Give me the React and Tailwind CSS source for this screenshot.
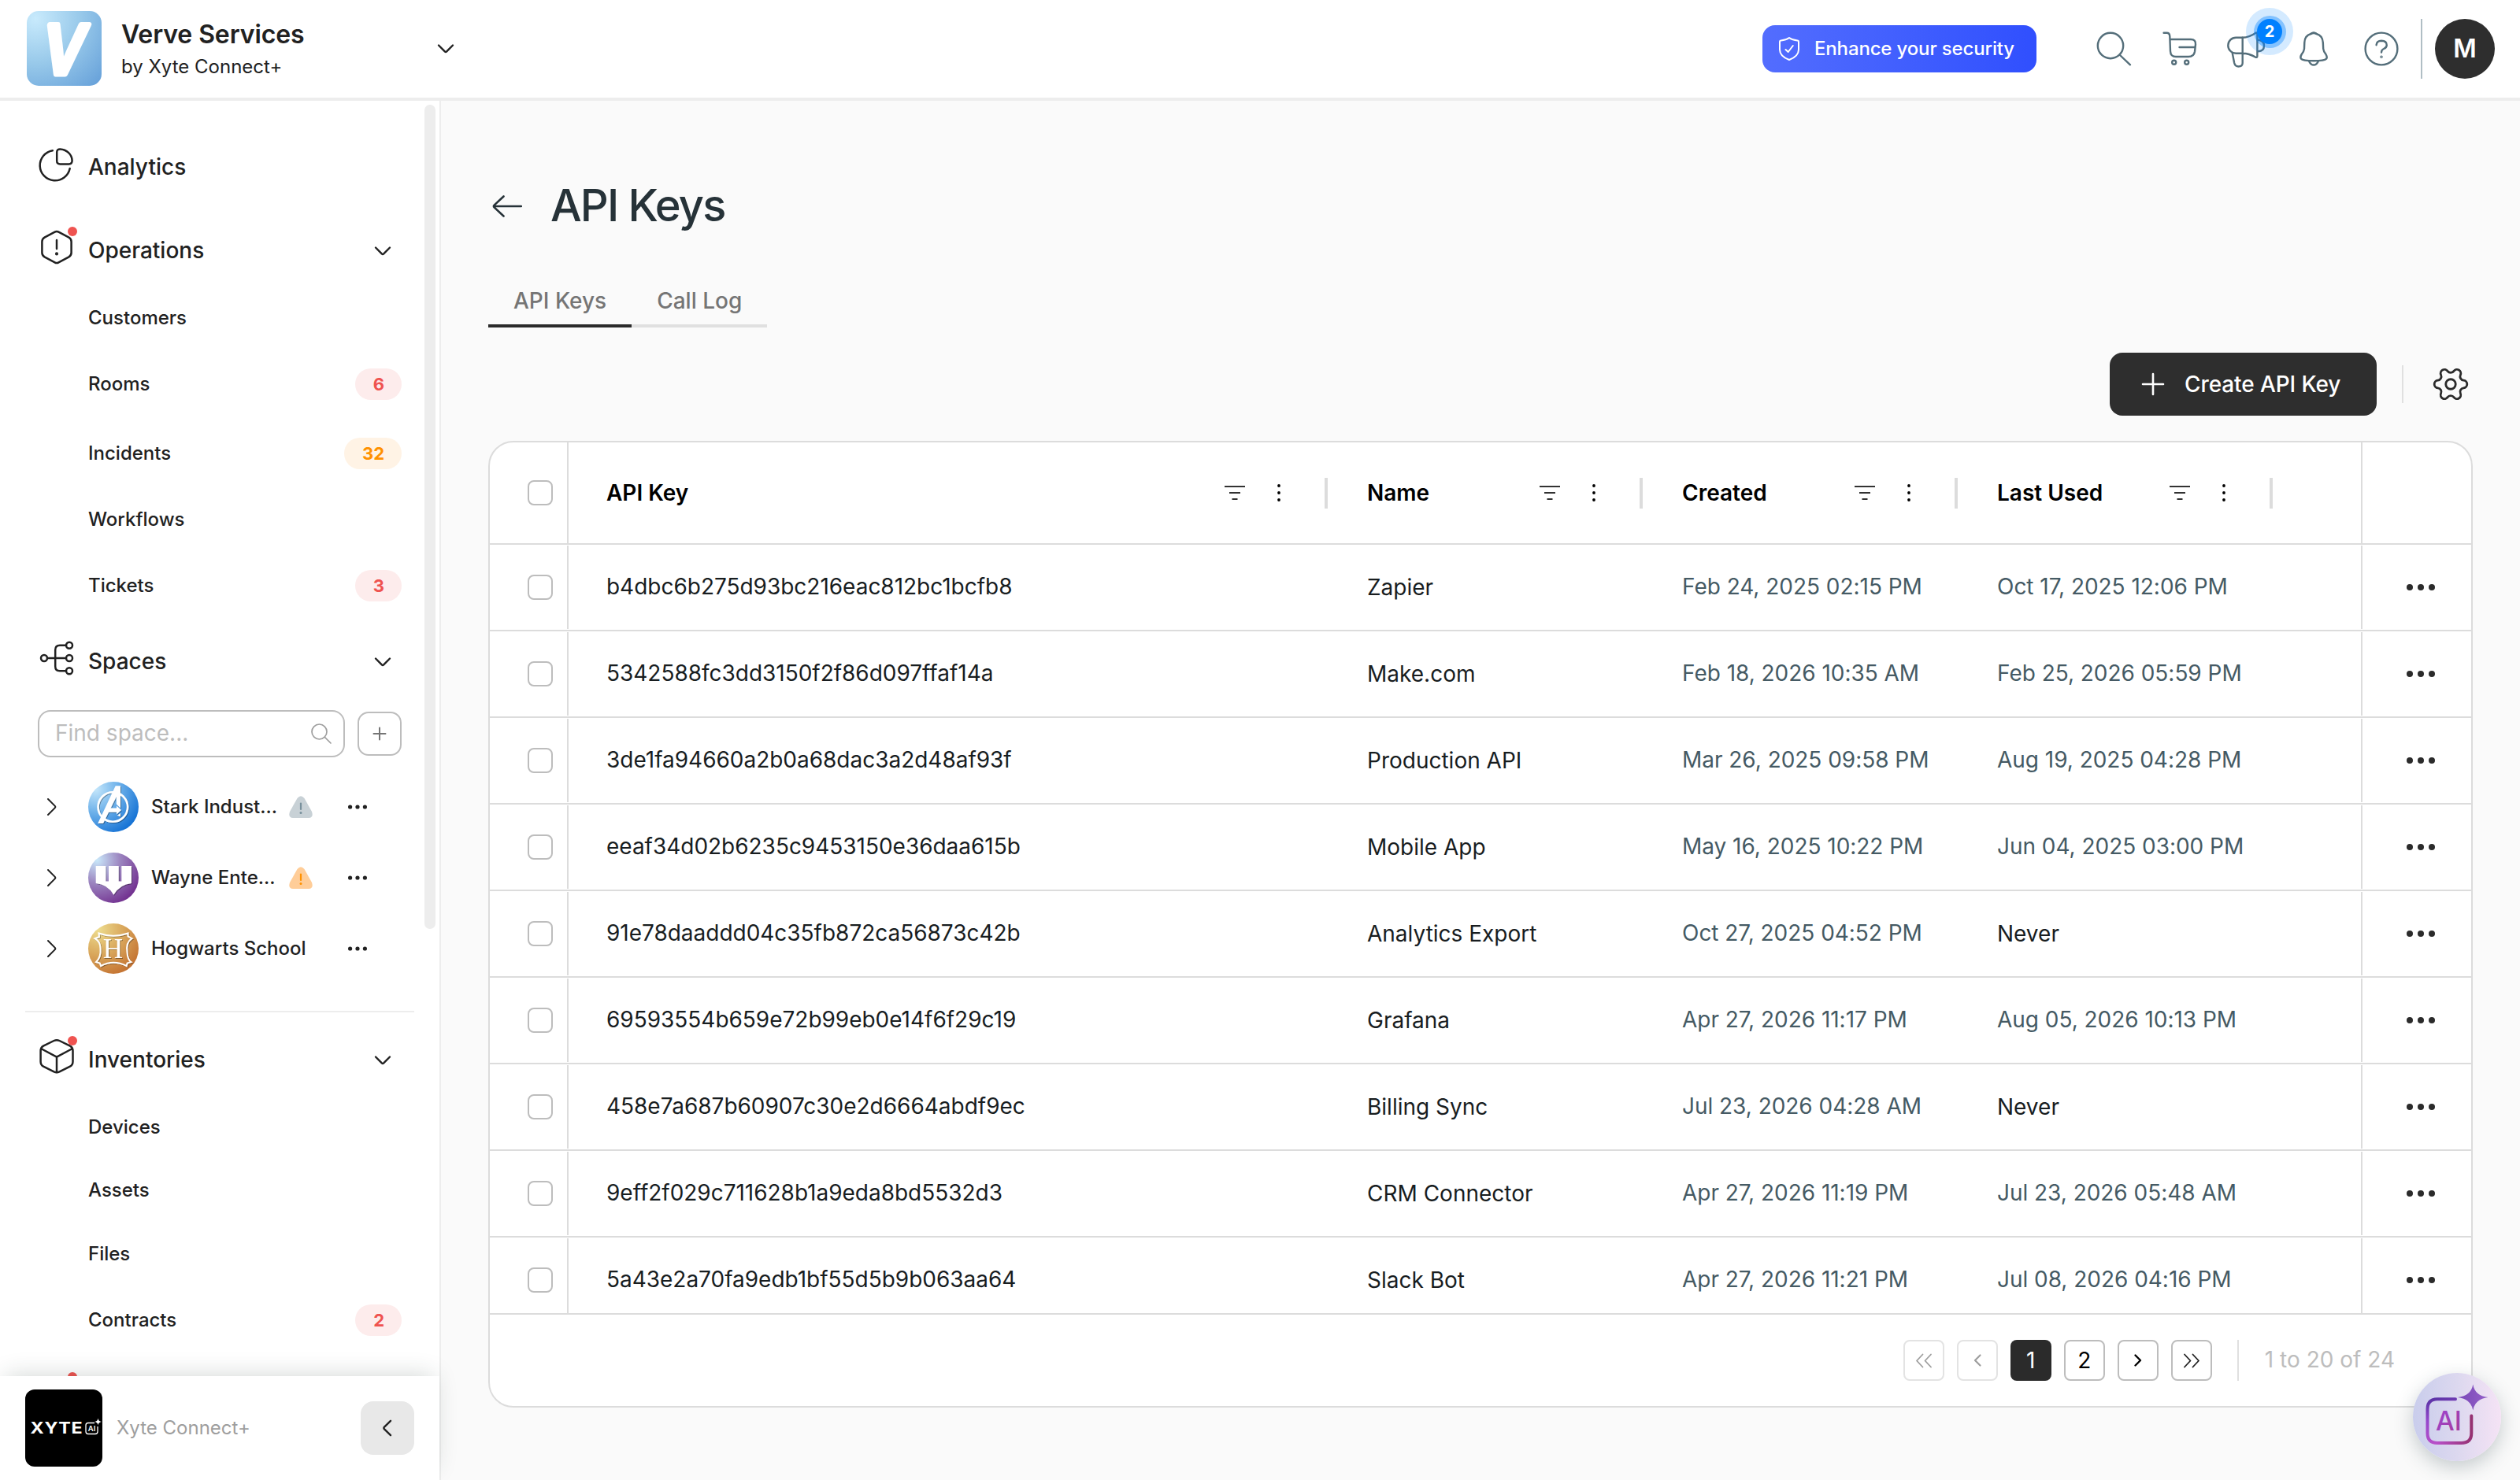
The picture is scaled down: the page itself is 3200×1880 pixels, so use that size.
import React from "react";
import { Settings } from "lucide-react";

const ROWS = [
  ["b4dbc6b275d93bc216eac812bc1bcfb8", "Zapier", "Feb 24, 2025 02:15 PM", "Oct 17, 2025 12:06 PM"],
  ["5342588fc3dd3150f2f86d097ffaf14a", "Make.com", "Feb 18, 2026 10:35 AM", "Feb 25, 2026 05:59 PM"],
  ["3de1fa94660a2b0a68dac3a2d48af93f", "Production API", "Mar 26, 2025 09:58 PM", "Aug 19, 2025 04:28 PM"],
  ["eeaf34d02b6235c9453150e36daa615b", "Mobile App", "May 16, 2025 10:22 PM", "Jun 04, 2025 03:00 PM"],
  ["91e78daaddd04c35fb872ca56873c42b", "Analytics Export", "Oct 27, 2025 04:52 PM", null],
  ["69593554b659e72b99eb0e14f6f29c19", "Grafana", "Apr 27, 2026 11:17 PM", "Aug 05, 2026 10:13 PM"],
  ["458e7a687b60907c30e2d6664abdf9ec", "Billing Sync", "Jul 23, 2026 04:28 AM", null],
  ["9eff2f029c711628b1a9eda8bd5532d3", "CRM Connector", "Apr 27, 2026 11:19 PM", "Jul 23, 2026 05:48 AM"],
  ["5a43e2a70fa9edb1bf55d5b9b063aa64", "Slack Bot", "Apr 27, 2026 11:21 PM", "Jul 08, 2026 04:16 PM"],
];

function Icon({ children, className = "", w = 48, h = 48, sw = 2.2 }) {
  return (
    <svg
      width={w}
      height={h}
      viewBox={`0 0 ${w} ${h}`}
      fill="none"
      stroke="currentColor"
      strokeWidth={sw}
      strokeLinecap="round"
      strokeLinejoin="round"
      className={`shrink-0 overflow-visible ${className}`}
    >
      {children}
    </svg>
  );
}

const ChevronDown = ({ className }) => (
  <Icon w={20} h={10} sw={2.4} className={className}>
    <path d="M1 0.5 L8.8 8.4 Q10 9.5 11.2 8.4 L19 0.5" />
  </Icon>
);

/* ---------- header ---------- */

function VerveLogo() {
  return (
    <svg width="96" height="96" viewBox="0 0 96 96" className="shrink-0 overflow-visible">
      <defs>
        <radialGradient id="verve" cx="0.12" cy="0.1" r="1.2">
          <stop offset="0" stopColor="#c8eafc" />
          <stop offset="0.5" stopColor="#98c9ea" />
          <stop offset="1" stopColor="#68a2da" />
        </radialGradient>
      </defs>
      <rect width="95" height="95" rx="15" fill="url(#verve)" />
      <text
        x="0"
        y="0"
        transform="translate(43 79.5) skewX(-10) scale(0.86 1)"
        textAnchor="middle"
        fontFamily="Inter, sans-serif"
        fontWeight="600"
        fontSize="86"
        fill="#fff"
        stroke="#fff"
        strokeWidth="7"
        strokeLinejoin="round"
      >
        V
      </text>
    </svg>
  );
}

function Header() {
  return (
    <header className="flex h-32 shrink-0 items-center border-b-4 border-[#ededed] bg-white pr-8 pl-[34px]">
      <div className="flex w-[542px] items-center">
        <VerveLogo />
        <div className="ml-6 flex flex-col pt-1">
          <span className="text-[32px] leading-[40px] font-semibold tracking-[-0.1px] text-[#212121]">Verve Services</span>
          <span className="text-2xl leading-[41px] text-[#212121]">by Xyte Connect+</span>
        </div>
        <ChevronDown className="ml-auto text-[#212121]" />
      </div>

      <button className="ml-auto flex h-[60px] w-[348px] items-center rounded-2xl bg-linear-to-r from-[#536dfe] to-[#304ffe] pl-5 text-white">
        <Icon w={28} h={32} sw={2}>
          <path d="M14 2 Q18 5 24.5 5.5 Q26 5.6 26 7.5 V17 Q26 25.5 14 30 Q2 25.5 2 17 V7.5 Q2 5.6 3.5 5.5 Q10 5 14 2Z" />
          <path d="M9.5 17 L12.7 20 L18.8 12" />
        </Icon>
        <span className="ml-[18px] text-2xl font-medium tracking-[-0.15px]">Enhance your security</span>
      </button>

      <div className="ml-[74px] flex items-center text-[#546e7a]">
        <Icon sw={2.4}>
          <circle cx="20" cy="20" r="16.2" />
          <path d="M32 32 L45 44.3" />
        </Icon>
        <Icon sw={2.4} className="ml-9">
          <path d="M3.6 3.8 H7.5 Q11 3.8 11.3 8 L12 27 Q12.3 34 19 34 H35 Q42 34 43 27.5 L44 18.5 Q44.5 12 38 12 H11.5" />
          <path d="M23.5 22 H43" />
          <circle cx="16.7" cy="41.3" r="2.5" />
          <circle cx="32.7" cy="41.3" r="2.5" />
        </Icon>
        <div className="relative ml-9">
          <Icon sw={2.4}>
            <path d="M19.7 9.7 H11.3 A10 10 0 0 0 11.3 29.7 H19.7" />
            <path d="M6.8 29.7 L9.2 42 Q10.3 46.5 14.5 46.5 Q19.7 46.5 19.7 42 V9.7 Q28 9.5 37 3.4 Q38.4 3 38.4 5 V33 Q38.4 35.6 36 34.6 Q28 29.7 19.7 29.7" />
            <path d="M39 12.5 Q47 13.5 47 20 Q47 27 39.5 27.3" />
          </Icon>
          <div className="absolute -top-[28px] left-[24px] flex size-[60px] items-center justify-center rounded-full bg-[#0080ff]/17">
            <div className="flex size-[41px] items-center justify-center rounded-full bg-[#0080ff]/38">
              <div className="flex size-8 items-center justify-center rounded-full bg-[#0080ff] text-[20px] font-bold text-white">2</div>
            </div>
          </div>
        </div>
        <Icon sw={2.4} className="ml-[38px]">
          <path d="M20.5 5 Q24 2 27.5 5 C33 6.5 35.5 10.5 35.8 16 L36.2 24 Q36.4 27 39.5 31 Q41.5 34.5 40.3 36.5 Q38 39.3 24 39.3 Q10 39.3 7.9 36.5 Q6.5 34.5 8.7 31 Q11.8 27 12 24 L12.3 16 C12.5 10.5 15 6.5 20.5 5Z" />
          <path d="M20.5 4.8 Q24 3.2 27.5 4.8 M18.3 40.2 Q20.5 44.5 24 44.5 Q27.5 44.5 29.7 40.2" />
        </Icon>
        <Icon sw={2.4} className="ml-[38px]">
          <circle cx="24" cy="24" r="20.4" />
          <path d="M17.6 19.2 Q18 13.8 24 13.8 Q30.8 14 30.8 19.4 Q30.6 22.6 27 24 Q24 25.2 24 28.6" />
          <circle cx="24" cy="34.2" r="0.6" />
        </Icon>
        <div className="ml-[26px] h-[76px] w-0.5 bg-[#b0bec5]" />
        <div className="ml-4 flex size-[76px] items-center justify-center rounded-full bg-[#2e2e2e] text-[32px] font-semibold text-white">M</div>
      </div>
    </header>
  );
}

/* ---------- sidebar ---------- */

const PieIcon = () => (
  <>
    <path d="M24.2 8.5 Q24.2 4.3 28.4 4.4 C36.5 4.8 43.4 11 43.6 19 Q43.6 23.4 39.5 23.4 H28.4 Q24.2 23.4 24.2 19.5Z" />
    <path d="M18.8 6.2 A19.2 19.2 0 1 0 40.7 29" />
  </>
);
const AlertHexIcon = () => (
  <>
    <path d="M21.6 4.6 Q24 3.2 26.4 4.6 L39.5 11.6 Q42.6 13.3 42.6 17 V31 Q42.6 34.6 39.5 36.3 L26.4 43.4 Q24 44.8 21.6 43.4 L8.5 36.3 Q5.4 34.6 5.4 31 V17 Q5.4 13.3 8.5 11.6Z" />
    <path d="M24 15 V26" />
    <circle cx="24" cy="32.4" r="0.8" fill="currentColor" />
  </>
);
const TreeIcon = () => (
  <>
    <circle cx="8" cy="24" r="4" />
    <circle cx="40" cy="24" r="4" />
    <circle cx="40" cy="7.8" r="4" />
    <circle cx="40" cy="40.2" r="4" />
    <path d="M12 24 H36 M36 7.8 H28 Q22.2 7.8 22.2 13.6 V34.4 Q22.2 40.2 28 40.2 H36" />
  </>
);
const CubeIcon = () => (
  <>
    <path d="M20.5 4 Q24 2.3 27.5 4 L41 10.6 Q44.5 12.6 44.5 17 V30.5 Q44.5 34.8 41 36.6 L27.5 43.4 Q24 45 20.5 43.4 L7 36.6 Q3.6 34.8 3.6 30.5 V17 Q3.6 12.6 7 10.6Z" />
    <path d="M5 14.5 L24 24.6 L43 14.5 M24 24.6 V44" />
  </>
);

function Section({ label, icon, dot, chevron = true, className = "", iconClass = "mb-2" }) {
  return (
    <div className={`flex h-[84px] shrink-0 items-center pr-[62px] pl-12 text-[#212121] ${className}`}>
      <div className={`relative ${iconClass}`}>
        <Icon sw={2.5}>{icon}</Icon>
        {dot && <div className="absolute -top-0.5 left-[38px] size-3 rounded-full bg-[#ef5350]" />}
      </div>
      <span className="ml-4 text-[28px] font-medium">{label}</span>
      {chevron && <ChevronDown className="mt-0.5 ml-auto" />}
    </div>
  );
}

function Item({ label, badge, tone = "red", className }) {
  return (
    <div className={`flex shrink-0 items-center justify-between pr-12 pl-28 text-[#212121] ${className}`}>
      <span className="text-2xl font-medium">{label}</span>
      {badge && (
        <span
          className={
            tone === "red"
              ? "flex h-10 items-center rounded-full bg-[#fdecec] pr-[22px] pl-[23px] text-[22px] font-bold text-[#ef5350]"
              : "flex h-10 items-center rounded-full bg-[#fff3e5] pr-[22px] pl-[23px] text-[22px] font-bold text-[#ff9100]"
          }
        >
          {badge}
        </span>
      )}
    </div>
  );
}

const StarkAvatar = () => (
  <svg width="64" height="64" viewBox="0 0 64 64" className="shrink-0">
    <defs>
      <radialGradient id="stark" cx="0.15" cy="0.15" r="1">
        <stop offset="0" stopColor="#c4e6fb" />
        <stop offset="0.45" stopColor="#6fb2ea" />
        <stop offset="1" stopColor="#1270d4" />
      </radialGradient>
      <filter id="drop" x="-20%" y="-20%" width="140%" height="140%">
        <feDropShadow dx="1" dy="1" stdDeviation="0.5" floodColor="#000" floodOpacity="0.35" />
      </filter>
    </defs>
    <circle cx="32" cy="32" r="32" fill="url(#stark)" />
    <g filter="url(#drop)" fill="#fff">
      <circle cx="31.3" cy="32" r="18.8" fill="none" stroke="#fff" strokeWidth="2.6" />
      <path d="M34.7 5.3 H41 V33.5 L35.8 28.5 V19 L19 53 H12.2Z" />
      <path d="M27 33.5 H36 V30.5 L42 36 L36 41.5 V38.8 H24.5Z" />
      <path d="M41 40 V44.5 L36.8 42.8Z" />
    </g>
  </svg>
);
const WayneAvatar = () => (
  <svg width="64" height="64" viewBox="0 0 64 64" className="shrink-0">
    <defs>
      <radialGradient id="wayne" cx="0.18" cy="0.15" r="1">
        <stop offset="0" stopColor="#c9e8fa" />
        <stop offset="0.45" stopColor="#9c86c0" />
        <stop offset="1" stopColor="#6f2a8c" />
      </radialGradient>
    </defs>
    <circle cx="32" cy="32" r="32" fill="url(#wayne)" />
    <path
      filter="url(#drop)"
      fill="#fff"
      d="M9.7 17 H22.3 V36.5 H26 V17 H38.7 V36.5 H42.3 V17 H55 V39 Q40 40.5 32.3 53.7 Q25 40.5 9.7 39Z"
    />
  </svg>
);
const HogwartsAvatar = () => (
  <svg width="64" height="64" viewBox="0 0 64 64" className="shrink-0">
    <defs>
      <radialGradient id="hogw" cx="0.2" cy="0.12" r="1">
        <stop offset="0" stopColor="#eddc8e" />
        <stop offset="0.5" stopColor="#d9a75c" />
        <stop offset="1" stopColor="#c3702f" />
      </radialGradient>
    </defs>
    <circle cx="32" cy="32" r="32" fill="url(#hogw)" />
    <g filter="url(#drop)">
      <path
        fill="none"
        stroke="#fff"
        strokeWidth="2"
        d="M13.5 12.5 Q32 19 50.5 12.5 L50.5 16.5 L55.5 19.2 Q47.5 24 49.5 37 Q50 46 54.5 49 L49.5 50.5 L48.8 54 Q32 45.5 16 54 L14.8 50.5 L10 49 Q16.5 43 15.5 32 Q15.5 23 8.5 19.2 L14 17Z"
      />
      <text x="31.5" y="44.3" textAnchor="middle" fontFamily="Liberation Serif, serif" fontSize="35" fill="#fff">
        H
      </text>
    </g>
  </svg>
);

function Warning({ tone }) {
  const gray = tone === "gray";
  return (
    <svg width="30" height="28" viewBox="0 0 30 28" className="ml-auto shrink-0">
      <path
        d="M10.5 3 Q15 -2.5 19.5 3 L29 20 Q31.5 27.5 25 28 H5 Q-1.5 27.5 1 20Z"
        fill={gray ? "#c8d1d6" : "#ffcd98"}
      />
      <path d="M15 9.5 V17" stroke={gray ? "#78909c" : "#ff9100"} strokeWidth="2.2" strokeLinecap="round" />
      <circle cx="15" cy="21.6" r="1.5" fill={gray ? "#78909c" : "#ff9100"} />
    </svg>
  );
}

function Space({ avatar, name, warn }) {
  return (
    <div className="flex h-[90px] shrink-0 items-center pr-[92px] pl-[60px] text-[#212121]">
      <Icon w={12} h={22} sw={2}>
        <path d="M1 1 L9.6 9.6 Q11 11 9.6 12.4 L1 21" />
      </Icon>
      <div className="ml-10">{avatar}</div>
      <div className="ml-4 flex w-[205px] items-center">
        <span className="pb-px text-2xl font-medium whitespace-nowrap">{name}</span>
        {warn && <Warning tone={warn} />}
      </div>
      <Icon w={24} h={6} className="ml-auto">
        <g fill="currentColor" stroke="none">
          <circle cx="2.6" cy="3" r="2.6" />
          <circle cx="12" cy="3" r="2.6" />
          <circle cx="21.4" cy="3" r="2.6" />
        </g>
      </Icon>
    </div>
  );
}

function Sidebar() {
  return (
    <aside className="flex w-[560px] shrink-0 flex-col border-r-2 border-[#ededed] bg-white">
      <nav className="relative flex h-[1620px] flex-col overflow-hidden">
        <Section label="Analytics" icon={<PieIcon />} chevron={false} className="mt-[42px]" iconClass="mb-1.5" />
        <Section label="Operations" icon={<AlertHexIcon />} dot className="mt-[22px]" />
        <Item label="Customers" className="h-[86px] pt-px" />
        <Item label="Rooms" badge="6" className="h-[84px]" />
        <Item label="Incidents" badge="32" tone="orange" className="h-[92px]" />
        <Item label="Workflows" className="h-[76px]" />
        <Item label="Tickets" badge="3" className="h-[92px]" />
        <Section label="Spaces" icon={<TreeIcon />} className="mt-2" />

        <div className="mt-5 flex shrink-0 items-center gap-4 pr-12 pl-12">
          <div className="flex h-[60px] w-[390px] items-center justify-between rounded-2xl border-2 border-[#bdbdbd] pr-[15px] pl-[20px]">
            <span className="pb-0.5 text-[28px] text-[#bdbdbd]">Find space...</span>
            <Icon w={26} h={26} sw={1.7} className="text-[#9e9e9e]">
              <circle cx="10.5" cy="10.5" r="9.5" />
              <path d="M17.5 17.5 L25 25" />
            </Icon>
          </div>
          <button className="flex size-14 items-center justify-center rounded-[14px] border-2 border-[#bdbdbd] text-[#757575]">
            <Icon w={16} h={16} sw={2}>
              <path d="M8 0.5 V15.5 M0.5 8 H15.5" />
            </Icon>
          </button>
        </div>

        <div className="mt-[18px] flex flex-col">
          <Space avatar={<StarkAvatar />} name="Stark Indust..." warn="gray" />
          <Space avatar={<WayneAvatar />} name="Wayne Ente..." warn="orange" />
          <Space avatar={<HogwartsAvatar />} name="Hogwarts School" />
        </div>

        <div className="mx-8 mt-[34px] h-0.5 shrink-0 bg-[#ededed]" />
        <Section label="Inventories" icon={<CubeIcon />} dot className="mt-[18px]" />
        <Item label="Devices" className="h-[87px]" />
        <Item label="Assets" className="h-[75px] pb-0.5" />
        <Item label="Files" className="h-[85px]" />
        <Item label="Contracts" badge="2" className="h-[84px]" />
        <Section label="" icon={null} dot chevron={false} className="mt-3" />

        <div className="absolute top-[5px] right-[5px] h-[1047px] w-3.5 rounded-full bg-[#ededed]" />
      </nav>

      <div className="relative flex h-[132px] items-center bg-white pr-8 pl-8 shadow-[0_-8px_28px_-8px_rgba(40,64,56,0.22)]">
        <svg width="98" height="98" viewBox="0 0 98 98" className="shrink-0">
          <rect width="98" height="98" rx="12" fill="#000" />
          <text x="6.5" y="56.3" textLength="67" lengthAdjust="spacingAndGlyphs" letterSpacing="0.6" fontFamily="Inter, sans-serif" fontWeight="700" fontSize="19.5" fill="#fff">
            XYTE
          </text>
          <path d="M88 42.5 H80 Q77 42.5 77 45.5 V53.5 Q77 56.5 80 56.5 H89 Q92 56.5 92 53.5 V47" fill="none" stroke="#fff" strokeWidth="1.3" />
          <text x="84.6" y="53.2" textAnchor="middle" fontFamily="Inter, sans-serif" fontWeight="600" fontSize="9.5" fill="#fff">
            AI
          </text>
          <path d="M92.5 36.5 Q92.9 40.5 97 41 Q92.9 41.5 92.5 45.5 Q92.1 41.5 88 41 Q92.1 40.5 92.5 36.5Z" fill="#fff" />
        </svg>
        <span className="ml-[18px] text-2xl text-[#9e9e9e]">Xyte Connect+</span>
        <button className="ml-auto flex size-[68px] items-center justify-center rounded-2xl bg-[#e8e8e8] pr-px text-[#212121]">
          <Icon w={11} h={20} sw={2.4}>
            <path d="M10 0.8 L1.8 8.8 Q0.8 10 1.8 11.2 L10 19.2" />
          </Icon>
        </button>
      </div>
    </aside>
  );
}

/* ---------- table ---------- */

const Checkbox = () => <div className="size-8 rounded-lg border-2 border-[#bdbdbd] bg-white" />;

function HeadCell({ label, className }) {
  return (
    <div className={`flex items-center pr-0.5 pl-12 ${className}`}>
      <span className="text-[28px] font-semibold text-black">{label}</span>
      <Icon w={26} h={18} className="ml-auto text-[#333]" sw={2}>
        <g strokeLinecap="butt">
          <path d="M0 1 H26 M6 9 H20 M9.5 17 H16.5" />
        </g>
      </Icon>
      <Icon w={4} h={22} className="ml-[41px] text-black">
        <g fill="currentColor" stroke="none">
          <circle cx="2" cy="2" r="1.9" />
          <circle cx="2" cy="11" r="1.9" />
          <circle cx="2" cy="20" r="1.9" />
        </g>
      </Icon>
      <div className="ml-14 h-[39px] w-1 bg-[#dcdcdc]" />
    </div>
  );
}

function DateCell({ value }) {
  return value ? (
    <div className="w-[400px] pb-0.5 pl-12 tracking-[-0.03px] text-[#455a64]">{value}</div>
  ) : (
    <div className="w-[400px] pl-12">Never</div>
  );
}

function PageButton({ children, className }) {
  return <button className={`flex size-[52px] items-center justify-center rounded-lg text-[28px] ${className}`}>{children}</button>;
}

function Table() {
  return (
    <div className="mt-8 flex h-[1228px] flex-col overflow-hidden rounded-[32px] border-2 border-[#dcdcdc] bg-white">
      <div className="flex h-[130px] shrink-0 border-b-2 border-[#dcdcdc]">
        <div className="flex w-[100px] items-center border-r-2 border-[#dcdcdc] pl-12">
          <Checkbox />
        </div>
        <HeadCell label="API Key" className="w-[966px]" />
        <HeadCell label="Name" className="w-[400px]" />
        <HeadCell label="Created" className="w-[400px]" />
        <HeadCell label="Last Used" className="w-[400px]" />
        <div className="ml-auto w-[140px] border-l-2 border-[#dcdcdc]" />
      </div>

      <div className="h-[976px] overflow-hidden">
        {ROWS.map(([key, name, created, used]) => (
          <div key={key} className="flex h-[110px] items-center border-b-2 border-[#dcdcdc] text-[28px] text-[#181d1f]">
            <div className="flex h-[106px] w-[100px] items-center border-r-2 border-[#dcdcdc] pl-12">
              <Checkbox />
            </div>
            <div className="w-[966px] pb-0.5 pl-12 tracking-[-0.02px]">{key}</div>
            <div className="w-[400px] pl-12">{name}</div>
            <DateCell value={created} />
            <DateCell value={used} />
            <div className="ml-auto flex h-[106px] w-[140px] items-center border-l-2 border-[#dcdcdc] pl-[56px] text-[#2b2b2b]">
              <Icon w={36} h={8}>
                <g fill="currentColor" stroke="none">
                  <circle cx="4" cy="4" r="4" />
                  <circle cx="18" cy="4" r="4" />
                  <circle cx="32" cy="4" r="4" />
                </g>
              </Icon>
            </div>
          </div>
        ))}
      </div>

      <div className="flex h-[118px] items-start justify-end border-t-2 border-[#dcdcdc] pt-8 pr-[97px]">
        <div className="flex gap-4">
          <PageButton className="border-2 border-[#e3e3e3] text-[#9e9e9e]">
            <Icon w={20} h={17} sw={1.8}>
              <path d="M8.5 0.5 L1 8.5 L8.5 16.5 M19 0.5 L11.5 8.5 L19 16.5" />
            </Icon>
          </PageButton>
          <PageButton className="border-2 border-[#e3e3e3] text-[#9e9e9e]">
            <Icon w={8} h={14} sw={2.2}>
              <path d="M7.5 0.5 L1 7 L7.5 13.5" />
            </Icon>
          </PageButton>
          <PageButton className="bg-[#2b2b2b] text-white">1</PageButton>
          <PageButton className="border-2 border-[#bdbdbd] text-black">2</PageButton>
          <PageButton className="border-2 border-[#bdbdbd] text-black">
            <Icon w={8} h={14} sw={2.4}>
              <path d="M0.5 0.5 L7 7 L0.5 13.5" />
            </Icon>
          </PageButton>
          <PageButton className="border-2 border-[#bdbdbd] text-[#212121]">
            <Icon w={20} h={17} sw={1.8}>
              <path d="M1 0.5 L8.5 8.5 L1 16.5 M11.5 0.5 L19 8.5 L11.5 16.5" />
            </Icon>
          </PageButton>
        </div>
        <div className="ml-8 h-[52px] w-0.5 bg-[#e0e0e0]" />
        <span className="ml-[33px] text-[28px] leading-[51px] text-[#bdbdbd]">1 to 20 of 24</span>
      </div>
    </div>
  );
}

function Main() {
  return (
    <main className="flex flex-1 flex-col bg-[#fafafa] px-[60px]">
      <div className="mt-[99px] flex h-[68px] items-center pl-[5px] text-[#263238]">
        <Icon w={38} h={28} sw={2.6} className="mt-0.5">
          <path d="M36.8 14 H2 M14.5 1.5 L2.6 12.6 Q1.2 14 2.6 15.4 L14.5 26.5" />
        </Icon>
        <h1 className="ml-9 text-[56px] leading-[68px] font-[525] tracking-[-1.85px]">API Keys</h1>
      </div>

      <div className="mt-[57px] flex h-16 text-[28px] font-medium text-[#757575]">
        <div className="flex items-center border-b-4 border-[#2b2b2b] px-8">API Keys</div>
        <div className="flex items-center border-b-4 border-[#e0e0e0] px-8">Call Log</div>
      </div>

      <div className="mt-8 flex h-20 items-center justify-end pr-[3px]">
        <button className="flex h-20 w-[339px] items-center rounded-2xl bg-[#2e2e2e] pl-[41px] text-white">
          <Icon w={28} h={28} sw={2.6}>
            <path d="M14 1 V27 M1 14 H27" />
          </Icon>
          <span className="ml-[26px] text-[28px] font-medium tracking-[-0.1px]">Create API Key</span>
        </button>
        <div className="ml-8 h-12 w-0.5 bg-[#e0e0e0]" />
        <Settings size={50} strokeWidth={1.35} className="ml-[35px] rotate-90 text-[#2b2b2b]" />
      </div>

      <Table />
    </main>
  );
}

function AssistantButton() {
  return (
    <button className="absolute right-6 bottom-6 size-28 rounded-full bg-linear-to-r from-[#c9cdec] via-[#dcd8ef] to-[#f5e3f5] shadow-[0_8px_24px_rgba(40,64,72,0.25)]">
      <svg width="112" height="112" viewBox="0 0 112 112" fill="none">
        <defs>
          <linearGradient id="aiText" x1="30" y1="48" x2="62" y2="72" gradientUnits="userSpaceOnUse">
            <stop offset="0" stopColor="#9c45d0" />
            <stop offset="1" stopColor="#a63c9c" />
          </linearGradient>
          <linearGradient id="aiStar" x1="58" y1="31" x2="95" y2="31" gradientUnits="userSpaceOnUse">
            <stop offset="0" stopColor="#7a48b8" />
            <stop offset="1" stopColor="#9460c8" />
          </linearGradient>
          <linearGradient id="aiEdge" x1="30" y1="89" x2="74" y2="80" gradientUnits="userSpaceOnUse">
            <stop offset="0" stopColor="#b850c8" />
            <stop offset="1" stopColor="#963272" />
          </linearGradient>
          <linearGradient id="aiLeft" x1="20" y1="35" x2="34" y2="89" gradientUnits="userSpaceOnUse">
            <stop offset="0" stopColor="#5e35a8" />
            <stop offset="0.45" stopColor="#9648cc" />
            <stop offset="1" stopColor="#b850c8" />
          </linearGradient>
        </defs>
        <path d="M54 33.3 H31 Q18.5 33.3 18.5 46 V76.5 Q18.5 89 31 89" stroke="url(#aiLeft)" strokeWidth="4" strokeLinecap="round" />
        <path d="M31 89 H61.5 Q74.3 89 74.3 76.5 V54.5" stroke="url(#aiEdge)" strokeWidth="4" strokeLinecap="round" />
        <text x="45.5" y="72.7" textAnchor="middle" fontFamily="Inter, sans-serif" fontWeight="500" fontSize="33.5" fill="url(#aiText)">
          AI
        </text>
        <path d="M76.3 14.5 Q78.5 28.8 95.5 31 Q78.5 33.2 76.3 47.5 Q74 33.2 57 31 Q74 28.8 76.3 14.5Z" fill="url(#aiStar)" />
      </svg>
    </button>
  );
}

export default function App() {
  return (
    <div className="relative flex h-[1880px] w-[3200px] flex-col overflow-hidden bg-[#fafafa] font-['Inter',sans-serif]">
      <Header />
      <div className="flex flex-1">
        <Sidebar />
        <Main />
      </div>
      <AssistantButton />
    </div>
  );
}
